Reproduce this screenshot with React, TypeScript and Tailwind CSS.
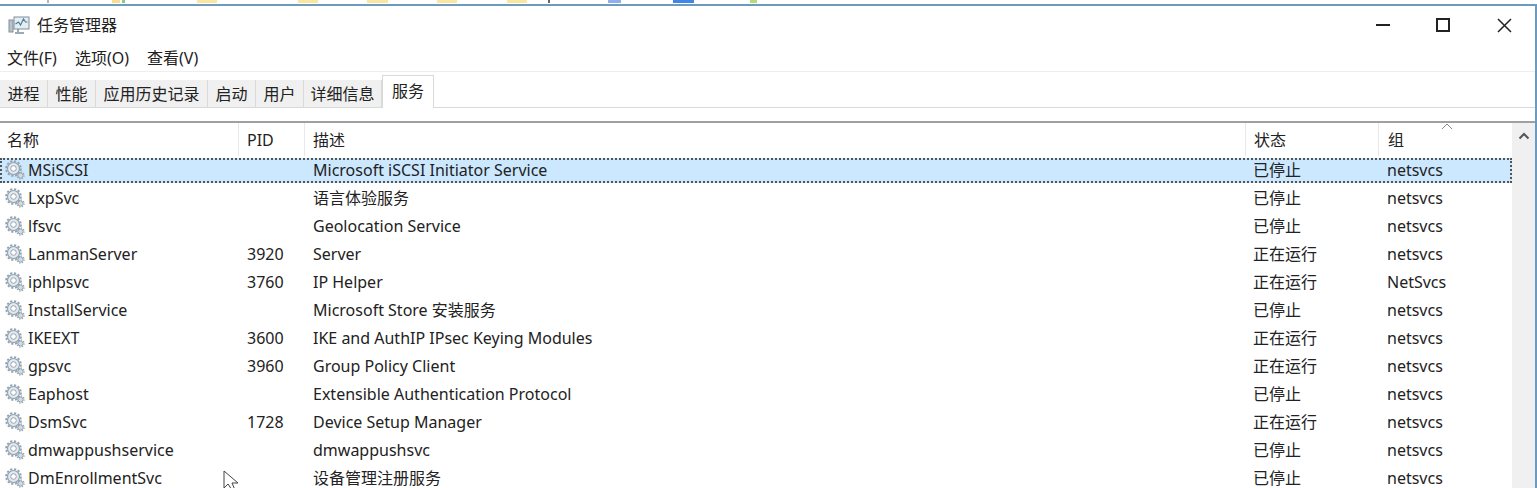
import React from 'react';

const FONT = '"Noto Sans", "Noto Sans CJK SC", sans-serif';

type Row = { name: string; pid: string; desc: string; status: string; group: string };

const rows: Row[] = [
  { name: 'MSiSCSI', pid: '', desc: 'Microsoft iSCSI Initiator Service', status: '已停止', group: 'netsvcs' },
  { name: 'LxpSvc', pid: '', desc: '语言体验服务', status: '已停止', group: 'netsvcs' },
  { name: 'lfsvc', pid: '', desc: 'Geolocation Service', status: '已停止', group: 'netsvcs' },
  { name: 'LanmanServer', pid: '3920', desc: 'Server', status: '正在运行', group: 'netsvcs' },
  { name: 'iphlpsvc', pid: '3760', desc: 'IP Helper', status: '正在运行', group: 'NetSvcs' },
  { name: 'InstallService', pid: '', desc: 'Microsoft Store 安装服务', status: '已停止', group: 'netsvcs' },
  { name: 'IKEEXT', pid: '3600', desc: 'IKE and AuthIP IPsec Keying Modules', status: '正在运行', group: 'netsvcs' },
  { name: 'gpsvc', pid: '3960', desc: 'Group Policy Client', status: '正在运行', group: 'netsvcs' },
  { name: 'Eaphost', pid: '', desc: 'Extensible Authentication Protocol', status: '已停止', group: 'netsvcs' },
  { name: 'DsmSvc', pid: '1728', desc: 'Device Setup Manager', status: '正在运行', group: 'netsvcs' },
  { name: 'dmwappushservice', pid: '', desc: 'dmwappushsvc', status: '已停止', group: 'netsvcs' },
  { name: 'DmEnrollmentSvc', pid: '', desc: '设备管理注册服务', status: '已停止', group: 'netsvcs' },
];

const tabs = ['进程', '性能', '应用历史记录', '启动', '用户', '详细信息'];
const tabWidths = ['w-[48px]', 'w-[48px]', 'w-[112px]', 'w-[48px]', 'w-[48px]', 'w-[78px]'];

// bits of the desktop toolbar that peek out above the window
const strip = [
  'ml-[47px] w-[2px] bg-[#b5b5b5]',
  'ml-[63px] w-[8px] bg-[#f7df8f]',
  'ml-[2px] w-[3px] bg-[#8fc98a]',
  'ml-[72px] w-[20px] bg-[#f9e7a0]',
  'ml-[81px] w-[20px] bg-[#f9e7a0]',
  'ml-[49px] w-[21px] bg-[#f9e7a0]',
  'ml-[49px] w-[20px] bg-[#f9e7a0]',
  'ml-[50px] w-[20px] bg-[#f9e7a0]',
  'ml-[21px] w-[2px] bg-[#666666]',
  'ml-[58px] w-[13px] bg-[#8fb0ec]',
  'ml-[52px] w-[21px] bg-[#3f86e8]',
  'ml-[56px] w-[7px] bg-[#b5dc7a]',
];

const Gear = () => (
  <svg width="22" height="22" viewBox="0 0 22 22" className="shrink-0">
    <g fill="none" stroke="#93a3b1">
      <circle cx="9.5" cy="9.5" r="6" fill="#e4eaef" strokeWidth="1.2" />
      <circle cx="9.5" cy="9.5" r="7.4" strokeWidth="1.8" strokeDasharray="2.2 1.7" />
      <circle cx="9.5" cy="9.5" r="2.8" fill="#ffffff" strokeWidth="1" />
      <circle cx="16.5" cy="16.5" r="2.6" fill="#d4dbe1" strokeWidth="1" />
      <circle cx="16.5" cy="16.5" r="3.6" strokeWidth="1.2" strokeDasharray="1.4 1.4" />
    </g>
  </svg>
);

const TaskIcon = () => (
  <svg width="22" height="20" viewBox="0 0 22 20">
    <rect x="6" y="2" width="15" height="12" fill="#e3edf2" stroke="#7f8f9b" />
    <path d="M7.5 9l3-2 2 3 3-6 2 3h2" fill="none" stroke="#4d7f9c" strokeWidth="1.2" />
    <rect x="1" y="5" width="4" height="12" fill="#b9c3ca" stroke="#7f8f9b" />
    <path d="M10 14v3M7 18h9" stroke="#7f8f9b" strokeWidth="1.5" />
  </svg>
);

export default function App() {
  return (
    <div className="relative w-[1537px] h-[488px] overflow-hidden bg-white text-[16px] leading-[22px] text-[#222222] flex flex-col" style={{ fontFamily: FONT }}>
      <div className="h-[4px] shrink-0 flex">
        {strip.map((cls, i) => (
          <div key={i} className={`${cls} h-[3px]`} />
        ))}
      </div>
      <div className="flex-1 min-h-0 flex flex-col border-t-2 border-r-2 border-[#6d9bc0]">
        {/* title bar */}
        <div className="h-[38px] shrink-0 flex items-center pl-[8px]">
          <TaskIcon />
          <span className="ml-[7px]">任务管理器</span>
          <div className="ml-auto flex items-center">
            <div className="w-[14px] h-[2px] bg-[#222222]" />
            <div className="ml-[46px] w-[14px] h-[14px] border-2 border-[#222222]" />
            <svg width="15" height="15" viewBox="0 0 15 15" className="ml-[47px] mr-[23px]">
              <path d="M1 1l13 13M14 1L1 14" stroke="#222222" strokeWidth="1.5" />
            </svg>
          </div>
        </div>

        {/* menu */}
        <div className="h-[28px] shrink-0 flex items-center gap-[18px] pl-[7px] border-b border-[#eeeeee]">
          <span>文件(F)</span>
          <span>选项(O)</span>
          <span>查看(V)</span>
        </div>

        {/* tabs */}
        <div className="h-[36px] shrink-0 flex items-end border-b border-[#d9d9d9]">
          {tabs.map((tab, i) => (
            <div key={tab} className={`${tabWidths[i]} h-[27px] flex items-center justify-center bg-[#f0f0f0] border-r border-[#d9d9d9]`}>
              {tab}
            </div>
          ))}
          <div className="w-[52px] h-[33px] -mb-px pb-[3px] flex items-center justify-center bg-white border border-b-0 border-[#d9d9d9]">服务</div>
        </div>

        <div className="h-[15px] shrink-0 border-b-2 border-[#a0a0a0]" />

        <div className="flex-1 min-h-0 flex">
          <div className="flex-1 min-w-0 flex flex-col">
            {/* column heads */}
            <div className="h-[33px] shrink-0 flex items-center relative">
              <div className="w-[239px] pl-[7px] h-full flex items-center border-r border-[#e8e8e8]">名称</div>
              <div className="w-[66px] pl-[8px] h-full flex items-center border-r border-[#e8e8e8]">PID</div>
              <div className="w-[941px] pl-[8px] h-full flex items-center border-r border-[#e8e8e8]">描述</div>
              <div className="w-[133px] pl-[8px] h-full flex items-center border-r border-[#e8e8e8]">状态</div>
              <div className="pl-[9px] h-full flex items-center">组</div>
              <svg width="12" height="7" viewBox="0 0 12 7" className="absolute left-[1441px] top-0">
                <path d="M1 6l5-5 5 5" fill="none" stroke="#888888" />
              </svg>
            </div>

            {/* rows */}
            {rows.map((r, i) => (
              <div key={r.name} className="h-[28px] shrink-0 flex items-center">
                <div
                  className={
                    i === 0
                      ? 'h-[25px] w-full flex items-center bg-[#cce8ff] border-2 border-dotted border-[#555555]'
                      : 'h-[25px] w-full flex items-center border-2 border-transparent'
                  }
                >
                  <div className="w-[236px] pl-[2px] flex items-center gap-[2px]">
                    <Gear />
                    <span>{r.name}</span>
                  </div>
                  <div className="w-[66px] pl-[9px]">{r.pid}</div>
                  <div className="w-[941px] pl-[9px]">{r.desc}</div>
                  <div className="w-[133px] pl-[8px]">{r.status}</div>
                  <div className="pl-[9px]">{r.group}</div>
                </div>
              </div>
            ))}
          </div>

          {/* scrollbar */}
          <div className="w-[23px] shrink-0 bg-[#f0f0f0] flex justify-center pt-[9px]">
            <svg width="12" height="8" viewBox="0 0 12 8">
              <path d="M1.5 6.5L6 2l4.5 4.5" fill="none" stroke="#555555" strokeWidth="2" />
            </svg>
          </div>
        </div>
      </div>

      {/* mouse pointer */}
      <svg width="18" height="20" viewBox="0 0 18 20" className="absolute left-[223px] top-[470px]">
        <path d="M1 1v17l4-4 4 6h3l-3-7h6z" fill="#ffffff" stroke="#444444" />
      </svg>
    </div>
  );
}
